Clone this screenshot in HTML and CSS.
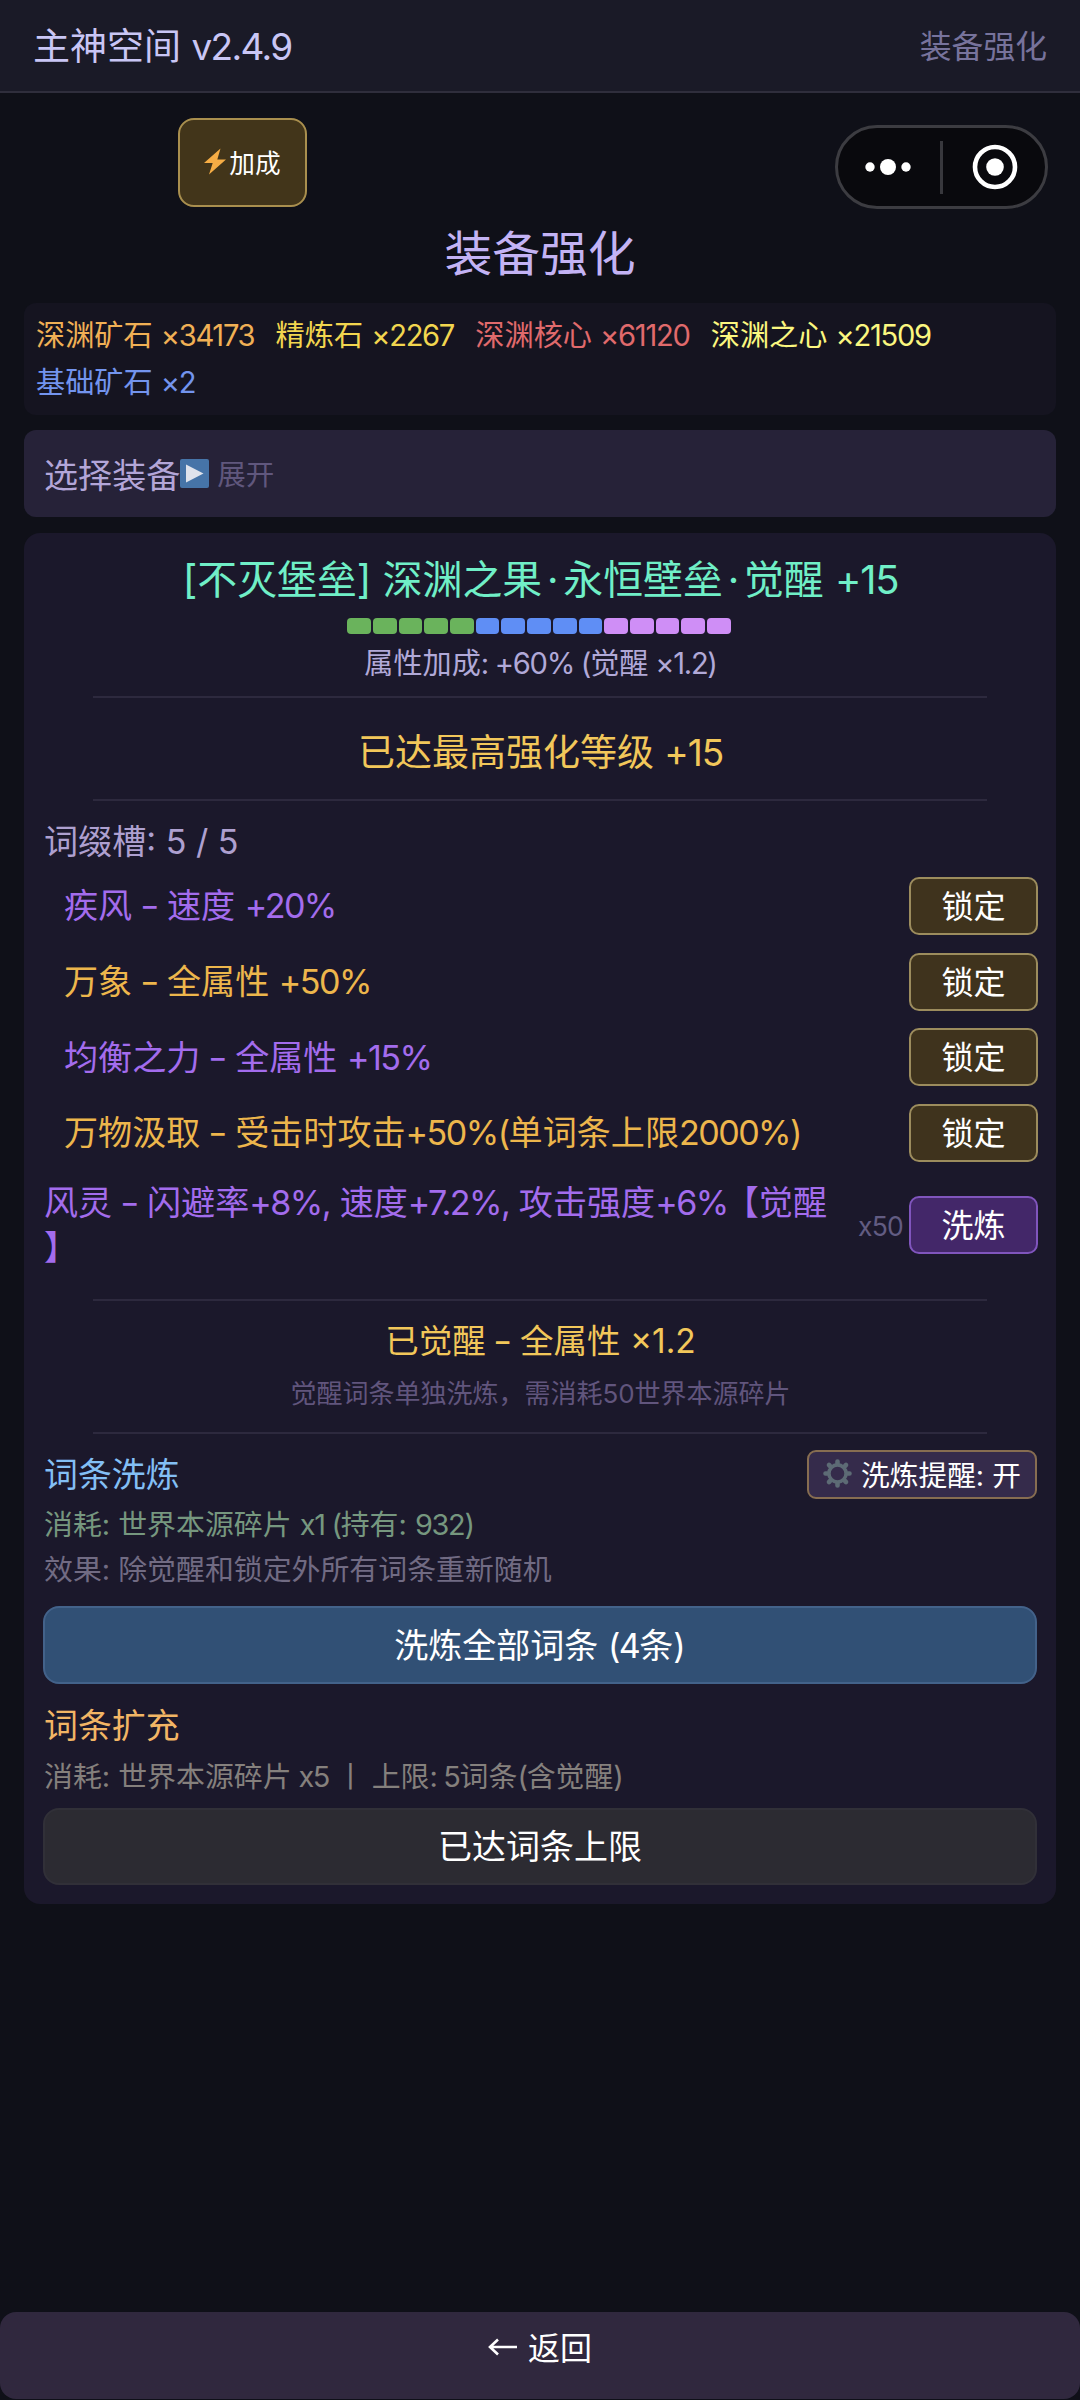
FILE: index.html
```html
<!DOCTYPE html>
<html lang="zh-CN">
<head>
<meta charset="utf-8">
<title>主神空间</title>
<link rel="stylesheet" href="styles.css">
</head>
<body>
<header class="topbar">
  <span class="app-name">主神空间 <span class="t">v2.4.9</span></span>
  <span class="page-name">装备强化</span>
</header>

<main class="content">
  <div class="toolbar">
    <button class="bonus">
      <svg class="bolt" viewBox="0 0 22 27"><path d="M16.500 .500 0 15h8.700L5 26.500 22 11.500H13.300z" fill="#f6ad45"/></svg><span>加成</span>
    </button>
    <div class="capsule">
      <svg class="dots" viewBox="0 0 46 18"><circle cx="5" cy="9" r="4.700"/><circle cx="23" cy="9" r="8"/><circle cx="41" cy="9" r="4.700"/></svg>
      <span class="capsule-line"></span>
      <svg class="ring" viewBox="0 0 46 46"><circle cx="23" cy="23" r="20" fill="none" stroke="#fff" stroke-width="4.600"/><circle cx="23" cy="23" r="8.800"/></svg>
    </div>
  </div>
  <h1 class="title">装备强化</h1>

  <section class="resources">
    <span class="res ore">深渊矿石 <span class="t">×34173</span></span>
    <span class="res refined">精炼石 <span class="t">×2267</span></span>
    <span class="res core">深渊核心 <span class="t">×61120</span></span>
    <span class="res heart">深渊之心 <span class="t">×21509</span></span>
    <span class="res basic">基础矿石 <span class="t">×2</span></span>
  </section>

  <section class="picker">
    <span>选择装备</span>
    <svg class="play" viewBox="0 0 29 29"><rect width="29" height="29" rx="2" fill="#4674a8"/><path d="M6 5.500v18L23.500 14.500z" fill="#dfe3ec"/></svg>
    <span class="picker-state">展开</span>
  </section>

  <section class="card">
    <h2 class="item-name">[不灭堡垒] 深渊之果<span class="dot">·</span>永恒壁垒<span class="dot">·</span>觉醒 <span class="n">+15</span></h2>
    <div class="cells">
      <i class="cell g"></i><i class="cell g"></i><i class="cell g"></i><i class="cell g"></i><i class="cell g"></i>
      <i class="cell b"></i><i class="cell b"></i><i class="cell b"></i><i class="cell b"></i><i class="cell b"></i>
      <i class="cell p"></i><i class="cell p"></i><i class="cell p"></i><i class="cell p"></i><i class="cell p"></i>
    </div>
    <p class="bonus-line">属性加成<span class="t">: +60% (</span>觉醒<span class="t"> ×1.2)</span></p>
    <hr class="rule">
    <p class="max-level">已达最高强化等级 <span class="n">+15</span></p>
    <hr class="rule">
    <p class="slots">词缀槽: 5 / 5</p>

    <div class="affixes">
      <div class="affix"><span class="affix-text epic">疾风 <b>-</b> 速度 <span class="t">+20%</span></span><button class="btn lock">锁定</button></div>
      <div class="affix"><span class="affix-text legend">万象 <b>-</b> 全属性 <span class="t">+50%</span></span><button class="btn lock">锁定</button></div>
      <div class="affix"><span class="affix-text epic">均衡之力 <b>-</b> 全属性 <span class="t">+15%</span></span><button class="btn lock">锁定</button></div>
      <div class="affix"><span class="affix-text legend">万物汲取 <b>-</b> 受击时攻击<span class="t">+50%(</span>单词条上限<span class="t">2000%)</span></span><button class="btn lock">锁定</button></div>
      <div class="affix awakened"><span class="affix-text epic">风灵 <b>-</b> 闪避率<span class="t">+8%,</span> 速度<span class="t">+7.2%,</span> 攻击强度<span class="t">+6%</span><span class="bracket">【</span>觉醒<br>】</span><span class="price n">x50</span><button class="btn wash">洗炼</button></div>
    </div>

    <hr class="rule">
    <p class="awake">已觉醒 <b>-</b> 全属性 ×1.2</p>
    <p class="awake-hint">觉醒词条单独洗炼，需消耗50世界本源碎片</p>
    <hr class="rule">

    <div class="section-head">
      <h3 class="section-title blue">词条洗炼</h3>
      <button class="reminder">
        <svg class="gear" viewBox="-14.500 -14.500 29 29"><g fill="none" stroke="#5d6b75"><circle r="8.600" stroke-width="3.600"/><path stroke-width="4.600" stroke-linecap="round" d="M0-12V-10M0 12V10M-12 0H-10M12 0H10M-8.500-8.500-7.500-7.500M8.500 8.500 7.500 7.500M-8.500 8.500-7.500 7.500M8.500-8.500 7.500-7.500"/></g></svg>
        <span>洗炼提醒: 开</span>
      </button>
    </div>
    <p class="note cost">消耗: 世界本源碎片 <span class="t">x1 (</span>持有: <span class="t">932)</span></p>
    <p class="note effect">效果: 除觉醒和锁定外所有词条重新随机</p>
    <button class="wide primary"><span>洗炼全部词条 <span class="t">(4</span>条)</span></button>

    <h3 class="section-title orange">词条扩充</h3>
    <p class="note expand">消耗: 世界本源碎片<span class="t"> x5 </span>丨<span class="t"> </span>上限<span class="t">: 5</span>词条<span class="t">(</span>含觉醒)</p>
    <button class="wide disabled">已达词条上限</button>
  </section>
</main>

<footer class="footer">
  <svg class="arrow" viewBox="0 0 30 18"><path d="M29 9H2M10 1.500 2 9l8 7.500" fill="none" stroke="#fff" stroke-width="2.600"/></svg>
  <span>返回</span>
</footer>
</body>
</html>
```
FILE: styles.css
```css
* { box-sizing: border-box; margin: 0; padding: 0; }
body {
  width: 1080px;
  height: 2400px;
  display: flex;
  flex-direction: column;
  background: #0f1018;
  color: #fff;
  font-family: Inter, "Noto Sans CJK SC", sans-serif;
  font-weight: 400;
  overflow: hidden;
  white-space: nowrap;
}
h1, h2, h3 { font-weight: 400; }
b { font-weight: 400; display: inline-block; transform: scaleX(1.25); }
button { font: inherit; color: #fff; background: none; border: 0; display: flex; align-items: center; justify-content: center; }
svg { display: block; flex: none; fill: #fff; }

/* tightened latin runs: plain numbers, and runs with signs or brackets */
.n { letter-spacing: -.03em; }
.t { letter-spacing: -.045em; }
.dot { margin: 0 4.800px; }
.bracket { margin-left: -3px; }

.topbar {
  height: 93px;
  padding: 0 33px 4px;
  display: flex;
  align-items: center;
  justify-content: space-between;
  background: #1a1a27;
  border-bottom: 2px solid #2f2e3c;
}
.app-name { font-size: 37px; color: #c9c6f5; }
.page-name { font-size: 31.800px; color: #77739c; }

.content { padding: 0 24px; flex: 1; }
.toolbar { height: 132px; padding: 25px 8px 0 154px; display: flex; justify-content: space-between; }
.bonus {
  width: 129px;
  height: 89px;
  gap: 3px;
  padding-bottom: 3px;
  font-size: 25.700px;
  background: #42351a;
  border: 2px solid #a98f4e;
  border-radius: 16px;
}
.bolt { width: 22px; height: 27px; }
.capsule {
  width: 213px;
  height: 84px;
  margin-top: 7px;
  padding-left: 26.500px;
  display: flex;
  align-items: center;
  background: #09090d;
  border: 3px solid #3c3c41;
  border-radius: 42px;
}
.dots { width: 46px; height: 18px; }
.capsule-line { width: 3px; height: 53px; margin: 0 29px 0 29.500px; background: #38383d; }
.ring { width: 46px; height: 46px; }
.title { text-align: center; font-size: 47.800px; line-height: 58px; height: 78px; color: #c3b3f4; }

.resources {
  height: 112px;
  padding: 9px 12px;
  display: flex;
  flex-wrap: wrap;
  column-gap: 21.300px;
  align-content: flex-start;
  font-size: 29.150px;
  line-height: 47px;
  background: #151420;
  border-radius: 12px;
}
.ore { color: #f0b055; }
.refined { color: #f2d64f; }
.core { color: #e06a6c; }
.heart { color: #fbf77f; }
.basic { color: #7394ee; }

.picker {
  height: 87px;
  margin-top: 15px;
  padding: 0 20px 2px;
  display: flex;
  align-items: center;
  font-size: 34.100px;
  color: #b3a6d8;
  background: #262238;
  border-radius: 12px;
}
.play { width: 29px; height: 29px; margin-top: 1px; }
.picker-state { margin-left: 8px; font-size: 28.500px; color: #60577d; }

.card {
  margin-top: 16px;
  padding: 19px 18px 19px 19px;
  height: 1371px;
  background: #1b182b;
  border-radius: 16px;
}
.item-name { text-align: center; font-size: 39.900px; line-height: 55px; color: #70efc7; }
.cells { margin: 11px 3px 0 0; display: flex; gap: 2px; justify-content: center; }
.cell { width: 23.730px; height: 16px; border-radius: 4px; }
.g { background: #6ab35c; }
.b { background: #5f8ef5; }
.p { background: #cf8ef6; }
.bonus-line { margin-top: 8px; text-align: center; font-size: 29.150px; line-height: 43px; color: #b1a9d8; }
.rule { height: 2px; margin: 11px 51px 0 50px; border: 0; background: #2d293e; }
.max-level { margin-top: 27px; text-align: center; font-size: 37px; line-height: 55px; color: #f2c75a; }
.max-level + .rule { margin-top: 19px; }
.slots { margin: 18px 0 12px 1px; font-size: 34.100px; line-height: 46px; color: #aea0d0; }

.affixes { display: flex; flex-direction: column; gap: 17.670px; }
.affix { height: 58px; padding-left: 21px; display: flex; align-items: center; font-size: 34.100px; }
.affix-text { flex: 1; line-height: 45.500px; }
.epic { color: #a36ced; }
.legend { color: #edb64c; }
.awakened { height: 91px; padding-left: 1px; }
.price { margin: 2px 6px 0 0; font-size: 26.500px; color: #625c82; }
.btn { width: 129px; height: 58px; padding-bottom: 4px; font-size: 32px; border-radius: 10px; }
.lock { background: #3f331d; border: 2px solid #9c8c5d; }
.wash { background: #432769; border: 2px solid #8055bd; }

.affixes + .rule { margin-top: 28px; }
.awake { margin-top: 17px; text-align: center; font-size: 33.500px; line-height: 46px; color: #f2c75a; }
.awake-hint { margin-top: 11px; text-align: center; font-size: 26px; line-height: 38px; color: #61557d; }
.awake-hint + .rule { margin-top: 19px; }

.section-head { margin-top: 16px; height: 49px; display: flex; align-items: center; justify-content: space-between; }
.section-title { padding: 1px 0 0 1px; font-size: 33.900px; line-height: 46px; }
.blue { color: #83bff5; }
.orange { margin-top: 18px; color: #f2b565; }
.reminder {
  width: 230px;
  height: 49px;
  margin-right: 1px;
  padding-bottom: 2px;
  gap: 9px;
  font-size: 28.700px;
  background: #352b4b;
  border: 2px solid #876d51;
  border-radius: 9px;
}
.gear { width: 29px; height: 29px; margin-top: 1px; }
.note { padding-left: 1px; font-size: 28.900px; line-height: 42px; }
.cost { margin-top: 5px; color: #76977f; }
.effect { margin-top: 3px; color: #716b83; }
.expand { margin-top: 7px; color: #85807d; }
.wide { width: 994px; padding-bottom: 3px; font-size: 34px; border-radius: 16px; }
.primary { height: 78px; margin-top: 15px; background: #315075; border: 2px solid #43628a; }
.disabled { height: 77px; margin-top: 10px; background: #2c2b32; border: 2px solid #313038; }

.footer {
  height: 87px;
  margin-bottom: 1px;
  padding-bottom: 19px;
  display: flex;
  align-items: center;
  justify-content: center;
  gap: 10px;
  font-size: 32px;
  background: #30283e;
  border-radius: 16px;
}
.arrow { width: 30px; height: 18px; margin-top: 2px; }
```
